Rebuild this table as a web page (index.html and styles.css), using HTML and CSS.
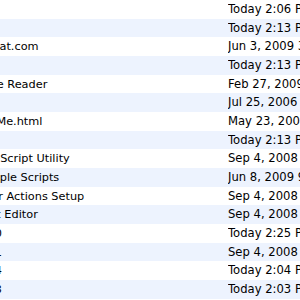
FILE: index.html
```html
<!DOCTYPE html>
<html lang="en">
<head>
  <meta charset="UTF-8" />
  <title>Finder list</title>
  <link rel="stylesheet" href="styles.css">
</head>
<body>
  <div class="list">
    <div class="row"><span class="name">Docs</span><span class="date">Today 2:06 PM</span></div>
    <div class="row"><span class="name">Misc</span><span class="date">Today 2:13 PM</span></div>
    <div class="row"><span class="name">MyChat.com</span><span class="date">Jun 3, 2009 3:41 PM</span></div>
    <div class="row"><span class="name">Temp</span><span class="date">Today 2:13 PM</span></div>
    <div class="row"><span class="name">Adobe Reader</span><span class="date">Feb 27, 2009 11:02 AM</span></div>
    <div class="row"><span class="name">Tools</span><span class="date">Jul 25, 2006 4:10 PM</span></div>
    <div class="row"><span class="name">ReadMe.html</span><span class="date">May 23, 2007 9:15 AM</span></div>
    <div class="row"><span class="name">Work</span><span class="date">Today 2:13 PM</span></div>
    <div class="row"><span class="name">AppleScript Utility</span><span class="date">Sep 4, 2008 6:22 PM</span></div>
    <div class="row"><span class="name">Example Scripts</span><span class="date">Jun 8, 2009 9:30 AM</span></div>
    <div class="row"><span class="name">Folder Actions Setup</span><span class="date">Sep 4, 2008 6:22 PM</span></div>
    <div class="row"><span class="name">Script Editor</span><span class="date">Sep 4, 2008 6:22 PM</span></div>
    <div class="row"><span class="name">Pic 10</span><span class="date">Today 2:25 PM</span></div>
    <div class="row"><span class="name">Pic 11</span><span class="date">Sep 4, 2008 6:22 PM</span></div>
    <div class="row"><span class="name">Pic 14</span><span class="date">Today 2:04 PM</span></div>
    <div class="row"><span class="name">Pic 13</span><span class="date">Today 2:03 PM</span></div>
  </div>
</body>
</html>
```

FILE: styles.css
```css
html, body {
  margin: 0;
  padding: 0;
  overflow: hidden;
  background: #fff;
}
body {
  font-family: "DejaVu Sans", Verdana, sans-serif;
  font-size: 11.3px;
  color: #000;
}
.list {
  width: 300px;
}
.row {
  display: grid;
  grid-template-columns: 260px 1fr;
  margin-left: -32px;
  height: 18.67px;
  line-height: 19px;
  white-space: nowrap;
  overflow: hidden;
}
.row:nth-child(even) {
  background: #edf3fe;
}
.name,
.date {
  overflow: hidden;
}
.date {
  font-size: 11.6px;
}
```
